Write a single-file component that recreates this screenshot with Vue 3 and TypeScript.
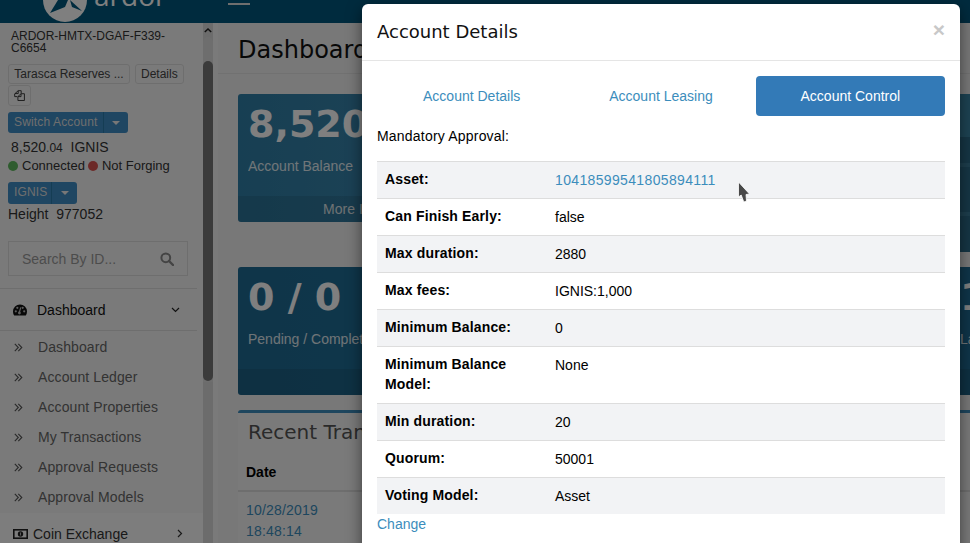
<script setup lang="ts">
const subItems = ['Dashboard', 'Account Ledger', 'Account Properties', 'My Transactions', 'Approval Requests', 'Approval Models']

const rows = [
  { label: 'Asset:', value: '10418599541805894111', link: true },
  { label: 'Can Finish Early:', value: 'false' },
  { label: 'Max duration:', value: '2880' },
  { label: 'Max fees:', value: 'IGNIS:1,000' },
  { label: 'Minimum Balance:', value: '0' },
  { label: 'Minimum Balance Model:', value: 'None' },
  { label: 'Min duration:', value: '20' },
  { label: 'Quorum:', value: '50001' },
  { label: 'Voting Model:', value: 'Asset' },
]
</script>

<template>
  <div class="page">
    <header class="topbar">
      <div class="logo">
        <svg class="logo-mark" width="48" height="23" viewBox="0 0 48 23">
          <circle cx="24" cy="0" r="22" fill="#fff" />
          <path d="M17 0 L9 13 L24 7 L27 0 Z" fill="#00577d" />
          <path d="M29 0 L41 11 L31 7 Z" fill="#00577d" />
        </svg>
        <span class="logo-text">ardor</span>
      </div>
      <span class="burger"></span>
    </header>

    <div class="layout">
      <aside class="sidebar">
        <div class="side-scroll">
          <div class="account">
            <div class="account-id">ARDOR-HMTX-DGAF-F339-C6654</div>
            <div class="btn-row">
              <span class="btn-plain name-btn">Tarasca Reserves ...</span>
              <span class="btn-plain">Details</span>
            </div>
            <span class="btn-plain copy-btn">
              <svg width="13" height="13" viewBox="0 0 13 13" fill="none" stroke="#333" stroke-width="1.1">
                <path d="M5 .8h3.500v3M4 7.800H.8V4.600L5 .8v3.400H1" />
                <path d="M8.300 4.400h4v8H4.600V7.800Z" />
                <path d="M8.300 4.400v3.400H4.800" />
              </svg>
            </span>
            <div class="split switch">
              <span class="split-main">Switch Account</span>
              <span class="split-caret"><i></i></span>
            </div>
            <div class="balance">8,520<small>.04</small>&nbsp; IGNIS</div>
            <div class="status">
              <span class="dot green"></span>Connected
              <span class="dot red"></span>Not Forging
            </div>
            <div class="split chain">
              <span class="split-main">IGNIS</span>
              <span class="split-caret"><i></i></span>
            </div>
            <div class="height">Height&nbsp; 977052</div>
          </div>

          <div class="search">
            <span>Search By ID...</span>
            <svg width="14" height="14" viewBox="0 0 14 14" fill="none" stroke="#888" stroke-width="2">
              <circle cx="5.800" cy="5.800" r="4.400" />
              <path d="M9 9l4 4" stroke-linecap="round" stroke-width="2.400" />
            </svg>
          </div>

          <div class="menu-head">
            <svg width="14" height="12" viewBox="0 0 14 12">
              <path fill="#111" d="M7 .5a7 7 0 0 1 7 7c0 1.500-.4 2.900-1.200 4H1.200A7 7 0 0 1 0 7.500 7 7 0 0 1 7 .5Z" />
              <circle cx="2.800" cy="7.300" r="1.100" fill="#bbb" />
              <circle cx="4.300" cy="3.800" r="1.100" fill="#bbb" />
              <circle cx="9.700" cy="3.800" r="1.100" fill="#bbb" />
              <circle cx="11.200" cy="7.300" r="1.100" fill="#bbb" />
              <path d="M7.800 3.400 6.200 8.600" stroke="#bbb" stroke-width="1.200" />
              <circle cx="6.400" cy="9" r="1.400" fill="#bbb" />
            </svg>
            <span>Dashboard</span>
            <svg class="chev" width="9" height="6" viewBox="0 0 9 6" fill="none" stroke="#222" stroke-width="1.200">
              <path d="M1 1l3.500 3.500L8 1" />
            </svg>
          </div>
          <ul class="submenu">
            <li v-for="item in subItems" :key="item">
              <svg width="9" height="9" viewBox="0 0 9 9" fill="none" stroke="#555" stroke-width="1.100">
                <path d="M.8.8 4.300 4.500.8 8.200M4.300.8 7.800 4.500 4.300 8.200" />
              </svg>
              <span>{{ item }}</span>
            </li>
          </ul>
          <div class="menu-next">
            <svg width="15" height="10" viewBox="0 0 15 10">
              <rect x=".8" y=".8" width="13.400" height="8.400" fill="none" stroke="#222" stroke-width="1.600" />
              <circle cx="7.500" cy="5" r="2.700" fill="#222" />
              <rect x="7" y="3.500" width="1" height="3" fill="#bbb" />
            </svg>
            <span>Coin Exchange</span>
            <svg class="chev" width="6" height="9" viewBox="0 0 6 9" fill="none" stroke="#333" stroke-width="1.200">
              <path d="M1 1l3.500 3.500L1 8" />
            </svg>
          </div>
        </div>
        <div class="scrollbar">
          <svg width="8" height="5" viewBox="0 0 8 5" fill="none" stroke="#222" stroke-width="1.500">
            <path d="M.8 4 4 1l3.200 3" />
          </svg>
          <div class="scroll-track">
            <div class="scroll-thumb"></div>
          </div>
        </div>
      </aside>

      <main class="main">
        <div class="content-head">Dashboard</div>
        <div class="cards">
          <div class="card">
            <div class="card-body">
              <div class="card-num">8,520</div>
              <div class="card-label">Account Balance</div>
            </div>
            <div class="card-foot">More Info</div>
          </div>
          <div class="card"></div>
          <div class="card"></div>
          <div class="card tall">
            <div class="tall-line first"></div>
            <div class="tall-line"></div>
          </div>
          <div class="card dark">
            <div class="card-body">
              <div class="card-num">0 / 0</div>
              <div class="card-label">Pending / Completed</div>
            </div>
            <div class="card-foot"></div>
          </div>
          <div class="card dark"></div>
          <div class="card dark"></div>
          <div class="card dark">
            <div class="card-body">
              <div class="card-num">1</div>
              <div class="card-label">Last</div>
            </div>
            <div class="card-foot"></div>
          </div>
        </div>
        <section class="panel">
          <h3>Recent Transactions</h3>
          <div class="panel-head">Date</div>
          <div class="panel-row">
            <a>10/28/2019<br />18:48:14</a>
          </div>
        </section>
      </main>
    </div>

    <div class="backdrop"></div>

    <div class="modal">
      <div class="modal-head">
        <h4>Account Details</h4>
        <span class="close">×</span>
      </div>
      <div class="modal-body">
        <nav class="tabs">
          <a>Account Details</a>
          <a>Account Leasing</a>
          <a class="active">Account Control</a>
        </nav>
        <p class="intro">Mandatory Approval:</p>
        <table class="details">
          <tbody>
            <tr v-for="row in rows" :key="row.label">
              <th><span>{{ row.label }}</span></th>
              <td><a v-if="row.link">{{ row.value }}</a><template v-else>{{ row.value }}</template></td>
            </tr>
          </tbody>
        </table>
        <a class="change">Change</a>
      </div>
    </div>

    <svg class="cursor" width="15" height="23" viewBox="0 0 15 23">
      <path d="M1.500 1 12.500 13 9 13.500 9.500 20 6.800 21 4.200 14 1.500 16Z" fill="#484848" stroke="#fff" stroke-width=".8" />
    </svg>
  </div>
</template>

<style>
html, body { margin: 0; overflow: hidden; }
</style>

<style scoped>
.page {
  position: relative;
  width: 970px;
  height: 543px;
  overflow: hidden;
  font-family: "Liberation Sans", Arial, sans-serif;
  font-size: 14px;
  color: #333;
  background: #f0f0f0;
}
.topbar {
  height: 23px;
  background: #00577d;
  display: flex;
  overflow: hidden;
}
.logo { display: flex; width: 228px; padding-left: 41px; box-sizing: border-box; }
.logo-mark { flex-shrink: 0; }
.logo-text {
  font-family: "Open Sans", sans-serif;
  font-size: 28px;
  font-weight: 400;
  line-height: 30px;
  margin: -20px 0 0 5px;
  color: #fff;
}
.burger { width: 22px; height: 2px; margin-top: 3px; background: #ddd; }

.layout { display: flex; height: 520px; }
.sidebar { width: 218px; display: flex; flex-shrink: 0; background: #f5f5f5; }
.side-scroll { width: 203px; overflow: hidden; }
.account { padding: 7px 0 0 8px; }
.account-id { padding-left: 3px; width: 170px; font-size: 12px; line-height: 12px; }
.btn-row { display: flex; gap: 5px; margin-top: 10px; }
.btn-plain {
  display: inline-flex;
  align-items: center;
  justify-content: center;
  height: 20px;
  box-sizing: border-box;
  padding: 0 5px;
  border: 1px solid #ddd;
  border-radius: 3px;
  font-size: 12px;
  background: #f4f4f4;
  color: #444;
}
.name-btn { width: 122px; white-space: nowrap; }
.copy-btn { width: 23px; height: 21px; margin-top: 1px; display: flex; }
.split {
  display: flex;
  height: 21px;
  margin-top: 6px;
  background: #3f8cc4;
  border-radius: 3px;
  color: #ddd;
  font-size: 12px;
  line-height: 21px;
  width: fit-content;
  letter-spacing: .15px;
  white-space: nowrap;
}
.split-main { padding: 0 6px; border-right: 1px solid #2a7aa8; }
.split-caret { width: 24px; display: flex; align-items: center; justify-content: center; }
.split-caret i { border: 4px solid transparent; border-top-color: #eee; border-bottom: 0; }
.switch .split-main { width: 83px; }
.chain { margin-top: 7px; height: 22px; }
.chain .split-main { width: 31px; }
.chain .split-caret { width: 25px; }
.balance { padding-left: 3px; margin-top: 5px; line-height: 18px; }
.balance small { font-size: 12px; }
.status { display: flex; align-items: center; font-size: 13px; line-height: 18px; }
.dot { width: 10px; height: 10px; border-radius: 50%; margin-right: 4px; }
.dot.green { background: #5cb85c; }
.dot.red { background: #d9534f; margin-left: 3px; }
.height { line-height: 20px; }
.search {
  margin: 17px 0 12px 8px;
  width: 180px;
  height: 35px;
  box-sizing: border-box;
  border: 1px solid #ddd;
  display: flex;
  align-items: center;
  justify-content: space-between;
  padding: 0 13px;
  color: #999;
}
.menu-head {
  height: 43px;
  width: 197px;
  box-sizing: border-box;
  border: solid #ddd;
  border-width: 1px 0;
  display: flex;
  align-items: center;
  padding-left: 13px;
  color: #111;
  background: #f5f5f5;
}
.menu-head span { margin-left: 10px; }
.chev { margin-left: auto; margin-right: 17px; }
.submenu { list-style: none; margin: 0; padding: 1px 0 0; height: 182px; width: 203px; box-sizing: border-box; }
.submenu li { height: 30px; display: flex; align-items: center; padding-left: 14px; color: #666; letter-spacing: .1px; }
.submenu li span { margin-left: 15px; }
.menu-next {
  height: 40px;
  display: flex;
  align-items: flex-start;
  padding: 13px 0 0 13px;
  box-sizing: border-box;
  background: #fafafa;
  color: #333;
}
.menu-next svg { margin-top: 3px; }
.menu-next span { margin-left: 5px; }
.menu-next .chev { margin-top: 3px; margin-right: 20px; }
.scrollbar { width: 10px; background: #d8d8d8; display: flex; flex-direction: column; align-items: center; padding-top: 5px; margin-right: 5px; }
.scroll-track { width: 10px; height: 345px; margin-top: 4px; border-radius: 5px 5px 0 0; background: #ddd; padding-top: 24px; box-sizing: border-box; }
.scroll-thumb { height: 320px; background: #777; border-radius: 5px; }

.main { flex: 1; min-width: 0; }
.content-head {
  height: 51px;
  box-sizing: border-box;
  padding: 12px 0 0 20px;
  border-bottom: 1px solid #e2e2e2;
  font-family: "DejaVu Sans", sans-serif;
  font-size: 24px;
  line-height: 30px;
  color: #111;
}
.cards {
  display: grid;
  grid-template-columns: repeat(4, 223.33px);
  gap: 15px 14px;
  align-items: start;
  margin: 20px 0 0 20px;
}
.card {
  height: 128px;
  border-radius: 3px;
  background: linear-gradient(90deg, #2f7ea6, #3d88ae);
  color: #fff;
  display: flex;
  flex-direction: column;
  overflow: hidden;
}
.card.tall { height: 158px; background: linear-gradient(#3a86a6 0 43px, #2d6d8a 43px); }
.tall-line { height: 4px; background: #3a7d9b; }
.tall-line.first { margin-top: 69px; margin-bottom: 45px; }
.card.dark { background: linear-gradient(90deg, #1f6a92, #1f6f98); }
.card-body { flex: 1; padding: 10px; }
.card-num {
  font-family: "DejaVu Sans", sans-serif;
  font-size: 38px;
  font-weight: 700;
  line-height: 40px;
  color: #fff;
}
.card-label { margin-top: 12px; line-height: 20px; opacity: .85; white-space: nowrap; }
.card-foot {
  height: 26px;
  padding-left: 6px;
  background: rgba(0, 0, 0, .1);
  text-align: center;
  line-height: 26px;
  opacity: .9;
  color: #eee;
}
.panel {
  width: 800px;
  margin: 15px 0 0 20px;
  border-top: 3px solid #3c8dbc;
  border-radius: 3px;
  background: #f5f5f5;
}
.panel h3 {
  margin: 0;
  padding: 9px 10px 0;
  font-family: "DejaVu Sans", sans-serif;
  font-size: 20px;
  font-weight: 400;
  line-height: 20px;
  color: #555;
}
.panel-head {
  margin-top: 20px;
  padding: 0 8px 8px;
  font-weight: 700;
  color: #000;
  line-height: 20px;
  border-bottom: 2px solid #ddd;
}
.panel-row { padding: 8px; line-height: 21px; color: #3c8dbc; letter-spacing: .2px; }

.backdrop { position: absolute; inset: 0; background: rgba(0, 0, 0, .5); }
.modal {
  position: absolute;
  left: 362px;
  top: 4px;
  width: 598px;
  height: 560px;
  background: #fff;
  border-radius: 6px;
  box-shadow: 0 5px 15px rgba(0, 0, 0, .5);
  color: #000;
}
.modal-head {
  height: 57px;
  box-sizing: border-box;
  border-bottom: 1px solid #e5e5e5;
  padding: 15px;
  display: flex;
  justify-content: space-between;
}
.modal-head h4 {
  margin: 0;
  font-family: "DejaVu Sans", sans-serif;
  font-size: 18px;
  font-weight: 400;
  line-height: 25px;
  color: #111;
}
.close { font-size: 21px; font-weight: 700; line-height: 21px; color: #c8c8c8; }
.modal-body { padding: 15px; }
.tabs { display: grid; grid-template-columns: repeat(3, 1fr); }
.tabs a {
  height: 40px;
  line-height: 40px;
  text-align: center;
  border-radius: 4px;
  color: #3c8dbc;
}
.tabs a.active { background: #337ab7; color: #fff; }
.intro { margin: 10px 0 15px; line-height: 20px; letter-spacing: .2px; }
.details { width: 100%; border-collapse: collapse; }
.details tr:nth-child(odd) { background: #f2f3f5; }
.details th, .details td {
  padding: 8px;
  border-top: 1px solid #ddd;
  line-height: 20px;
  text-align: left;
  vertical-align: top;
}
.details th { width: 154px; font-weight: 700; letter-spacing: .15px; }
.details th span { display: block; margin-top: -1px; margin-bottom: 1px; }
.details a { color: #3c8dbc; letter-spacing: .35px; }
.change { color: #3c8dbc; line-height: 20px; display: block; }
.cursor { position: absolute; left: 737px; top: 181px; }
</style>
